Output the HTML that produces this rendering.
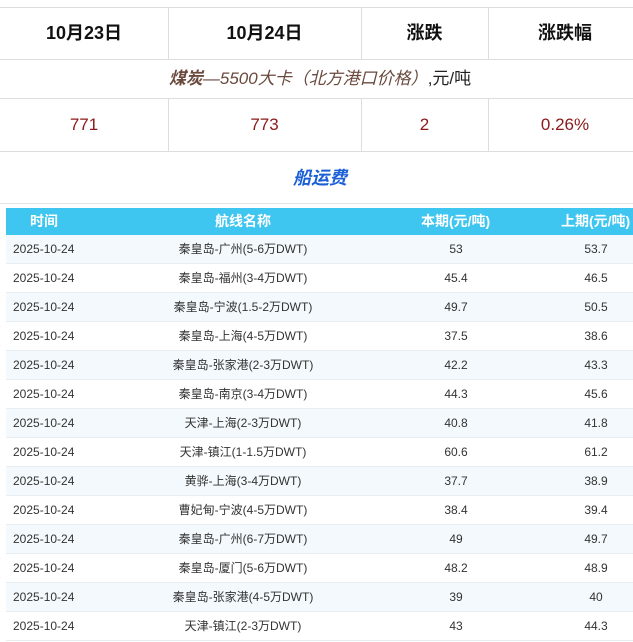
<!DOCTYPE html><html><head><meta charset="utf-8"><style>
body{margin:0;width:633px;height:642px;overflow:hidden;background:#fff;font-family:"Liberation Sans","Noto Sans CJK SC",sans-serif;position:relative}
.a{position:absolute}
.hl{position:absolute;left:0;width:633px;height:1px;background:#ddd}
.vl{position:absolute;width:1px;background:#ddd}
.c{position:absolute;text-align:center;white-space:nowrap}
.h1{top:7px;height:52px;line-height:52px;font-size:18px;font-weight:bold;color:#111}
.v{top:98px;height:53px;line-height:53px;font-size:17px;color:#8b1a1a}
.row{position:absolute;left:6px;width:627px;height:29px;border-bottom:1px solid #e6eef2;box-sizing:border-box;font-size:12px;color:#333;line-height:29px}
.row span{position:absolute;white-space:nowrap}
</style></head><body>
<div class="hl" style="top:7px"></div>
<div class="hl" style="top:59px"></div>
<div class="hl" style="top:98px"></div>
<div class="hl" style="top:151px"></div>
<div class="hl" style="top:203px;background:#e4e4e4"></div>
<div class="vl" style="left:168px;top:7px;height:52px"></div>
<div class="vl" style="left:361px;top:7px;height:52px"></div>
<div class="vl" style="left:488px;top:7px;height:52px"></div>
<div class="vl" style="left:168px;top:98px;height:53px"></div>
<div class="vl" style="left:361px;top:98px;height:53px"></div>
<div class="vl" style="left:488px;top:98px;height:53px"></div>
<div class="c h1" style="left:0;width:168px">10月23日</div>
<div class="c h1" style="left:168px;width:193px">10月24日</div>
<div class="c h1" style="left:361px;width:127px">涨跌</div>
<div class="c h1" style="left:488px;width:154px">涨跌幅</div>
<div class="c" style="left:0;width:640px;top:60px;height:38px;line-height:38px;font-size:17px;color:#222"><i style="color:#6b4a3e;font-weight:bold">煤炭</i><i style="color:#6b4a3e">—5500大卡（北方港口价格）</i>,元/吨</div>
<div class="c v" style="left:0;width:168px">771</div>
<div class="c v" style="left:168px;width:193px">773</div>
<div class="c v" style="left:361px;width:127px">2</div>
<div class="c v" style="left:488px;width:154px">0.26%</div>
<div class="c" style="left:0;width:640px;top:165px;line-height:26px;font-size:18px;font-weight:bold;font-style:italic;color:#1a5fd6">船运费</div>
<div class="a" style="left:6px;top:208px;width:627px;height:27px;background:#3ec5f0;color:#fff;font-size:14px;font-weight:bold;line-height:27px;white-space:nowrap">
<span class="a" style="left:24px">时间</span><span class="a" style="left:209px">航线名称</span><span class="a" style="left:415px">本期(元/吨)</span><span class="a" style="left:555px">上期(元/吨)</span></div>
<div id="t"></div>
<script>
var d=[["秦皇岛-广州(5-6万DWT)",53,53.7],["秦皇岛-福州(3-4万DWT)",45.4,46.5],["秦皇岛-宁波(1.5-2万DWT)",49.7,50.5],["秦皇岛-上海(4-5万DWT)",37.5,38.6],["秦皇岛-张家港(2-3万DWT)",42.2,43.3],["秦皇岛-南京(3-4万DWT)",44.3,45.6],["天津-上海(2-3万DWT)",40.8,41.8],["天津-镇江(1-1.5万DWT)",60.6,61.2],["黄骅-上海(3-4万DWT)",37.7,38.9],["曹妃甸-宁波(4-5万DWT)",38.4,39.4],["秦皇岛-广州(6-7万DWT)",49,49.7],["秦皇岛-厦门(5-6万DWT)",48.2,48.9],["秦皇岛-张家港(4-5万DWT)",39,40],["天津-镇江(2-3万DWT)",43,44.3]];
var h="";d.forEach(function(r,i){h+='<div class="row" style="top:'+(235+i*29)+'px;background:'+(i%2?'#fff':'#f3f9fc')+'"><span style="left:7px">2025-10-24</span><span style="left:143px;width:188px;text-align:center">'+r[0]+'</span><span style="left:400px;width:100px;text-align:center">'+r[1]+'</span><span style="left:540px;width:100px;text-align:center">'+r[2]+'</span></div>'});
document.getElementById("t").innerHTML=h;
</script>
</body></html>
